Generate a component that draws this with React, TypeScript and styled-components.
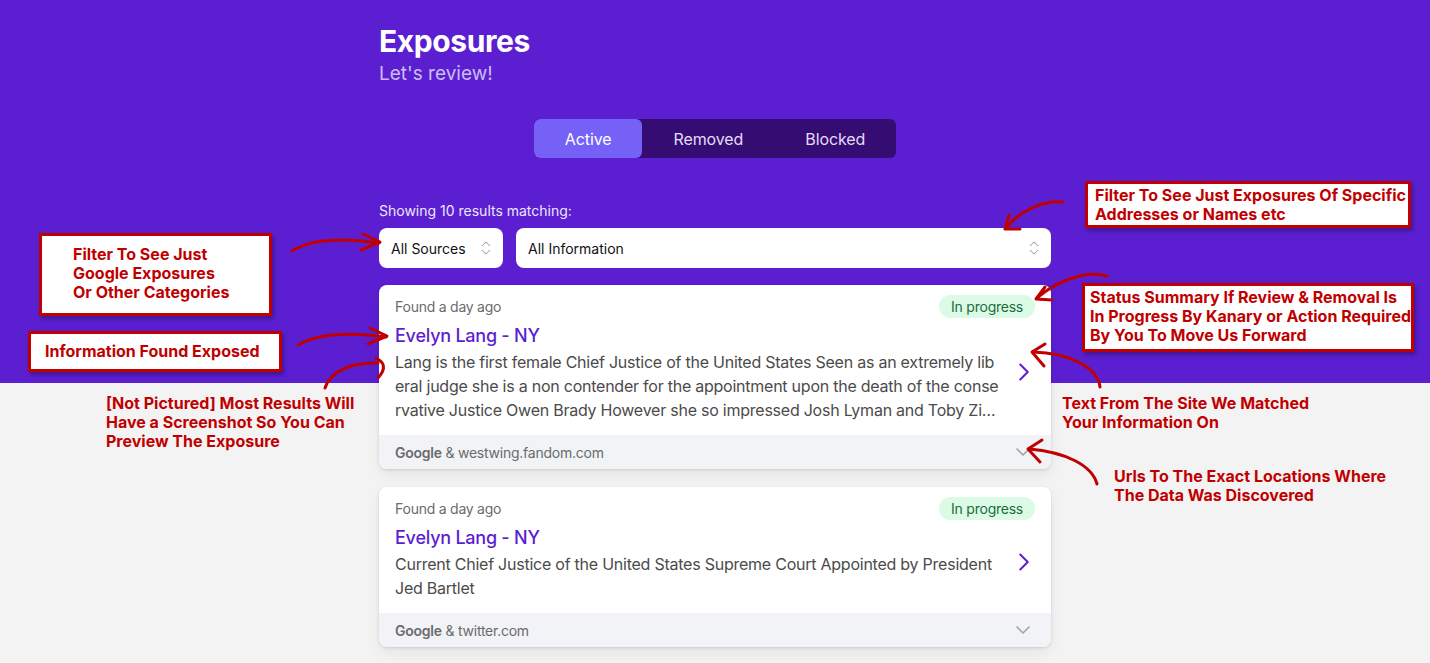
import styled, { createGlobalStyle } from "styled-components";
import { ChevronsUpDown, ChevronRight, ChevronDown } from "lucide-react";

const GlobalStyle = createGlobalStyle`
  html, body {
    margin: 0;
    padding: 0;
    background: #f3f3f3;
    font-family: Inter, "Noto Sans", "Liberation Sans", sans-serif;
  }
`;

const Page = styled.div`
  position: relative;
  height: 663px;
  overflow: hidden;
  background: linear-gradient(
    to bottom,
    #5b1fd1 0,
    #5b1fd1 383px,
    #f3f3f3 383px
  );
`;

const Column = styled.main`
  width: 672px;
  margin: 0 auto;
  padding-top: 23px;
  display: flex;
  flex-direction: column;
`;

const Title = styled.h1`
  margin: 0;
  font-size: 30px;
  line-height: 36px;
  font-weight: 700;
  color: #ffffff;
  letter-spacing: -0.4px;
`;

const Subtitle = styled.p`
  margin: 3px 0 0;
  font-size: 19px;
  line-height: 24px;
  color: #cbbdf7;
`;

const Tabs = styled.div`
  align-self: center;
  display: flex;
  margin-top: 33px;
  background: #350c72;
  border-radius: 6px;
  overflow: hidden;
`;

const Tab = styled.button<{ $active?: boolean }>`
  border: 0;
  height: 39px;
  padding: 0 31px;
  font-family: inherit;
  font-size: 16px;
  letter-spacing: -0.1px;
  border-radius: 6px;
  color: ${(p) => (p.$active ? "#ffffff" : "#e4dcfb")};
  background: ${(p) => (p.$active ? "#7561f6" : "transparent")};
`;

const Showing = styled.div`
  margin-top: 43px;
  font-size: 14px;
  line-height: 20px;
  color: #ece6ff;
`;

const Filters = styled.div`
  display: flex;
  gap: 13px;
  margin-top: 7px;
`;

const Select = styled.div<{ $grow?: boolean }>`
  display: flex;
  align-items: center;
  justify-content: space-between;
  height: 40px;
  box-sizing: border-box;
  padding: 0 8px 0 12px;
  border-radius: 8px;
  background: #ffffff;
  font-size: 14px;
  color: #111111;
  width: ${(p) => (p.$grow ? "auto" : "124px")};
  flex: ${(p) => (p.$grow ? "1" : "none")};

  svg {
    color: #a3a3a3;
  }
`;

const Results = styled.div`
  display: flex;
  flex-direction: column;
  gap: 18px;
  margin-top: 17px;
`;

const Card = styled.article`
  background: #ffffff;
  border-radius: 8px;
  overflow: hidden;
  letter-spacing: -0.24px;
  box-shadow: 0 1px 3px rgba(0, 0, 0, 0.12), 0 6px 14px rgba(0, 0, 0, 0.06);
`;

const CardBody = styled.div`
  padding: 10px 16px 13px;
`;

const CardTop = styled.div`
  display: flex;
  align-items: center;
  justify-content: space-between;
  height: 23px;
`;

const Found = styled.span`
  font-size: 14px;
  color: #6b6b6b;
`;

const Badge = styled.span`
  height: 23px;
  line-height: 23px;
  padding: 0 12px;
  border-radius: 12px;
  background: #dcfbe6;
  color: #1d6b3c;
  font-size: 14px;
`;

const CardMain = styled.div`
  display: flex;
  align-items: center;
  gap: 10px;
  margin-top: 4px;

  svg {
    flex: none;
    margin-right: -4px;
    color: #5b1fd1;
  }
`;

const CardText = styled.div`
  flex: 1;
  min-width: 0;
`;

const Name = styled.div`
  font-size: 18px;
  line-height: 28px;
  font-weight: 500;
  color: #5b1fd1;
`;

const Snippet = styled.p`
  margin: 0;
  font-size: 16px;
  line-height: 24px;
  color: #4b4b4b;
  word-break: break-all;
  display: -webkit-box;
  -webkit-line-clamp: 3;
  -webkit-box-orient: vertical;
  overflow: hidden;
`;

const CardFooter = styled.div`
  display: flex;
  align-items: center;
  justify-content: space-between;
  height: 34px;
  padding: 0 16px;
  background: #f1f3f7;
  font-size: 14px;
  color: #6b6b6b;

  b {
    font-weight: 600;
  }

  svg {
    color: #a0a0a0;
  }
`;

const Note = styled.div<{ $boxed?: boolean }>`
  position: absolute;
  box-sizing: border-box;
  font-size: 16px;
  line-height: 19px;
  font-weight: 700;
  color: #c00000;
  white-space: nowrap;
  ${(p) =>
    p.$boxed &&
    `
    background: #ffffff;
    border: 3px solid #c00000;
    box-shadow: 2px 3px 4px rgba(0, 0, 0, 0.3);
  `}
`;

const Arrows = styled.svg`
  position: absolute;
  left: 0;
  top: 0;
  pointer-events: none;

  path {
    fill: none;
    stroke: #c00000;
    stroke-width: 3;
    stroke-linecap: round;
    stroke-linejoin: round;
  }
`;

type Result = {
  name: string;
  text: string;
  site: string;
};

const results: Result[] = [
  {
    name: "Evelyn Lang - NY",
    text:
      "Lang is the first female Chief Justice of the United States Seen as an extremely liberal judge she is a non contender for the appointment upon the death of the conservative Justice Owen Brady However she so impressed Josh Lyman and Toby Ziegler that she was nominated",
    site: "westwing.fandom.com",
  },
  {
    name: "Evelyn Lang - NY",
    text:
      "Current Chief Justice of the United States Supreme Court Appointed by President Jed Bartlet",
    site: "twitter.com",
  },
];

const ResultCard = ({ name, text, site }: Result) => (
  <Card>
    <CardBody>
      <CardTop>
        <Found>Found a day ago</Found>
        <Badge>In progress</Badge>
      </CardTop>
      <CardMain>
        <CardText>
          <Name>{name}</Name>
          <Snippet>{text}</Snippet>
        </CardText>
        <ChevronRight size={30} strokeWidth={1.6} />
      </CardMain>
    </CardBody>
    <CardFooter>
      <span>
        <b>Google</b> &amp; {site}
      </span>
      <ChevronDown size={24} strokeWidth={1.5} />
    </CardFooter>
  </Card>
);

const App = () => {
  return (
    <Page>
      <GlobalStyle />
      <Column>
        <Title>Exposures</Title>
        <Subtitle>Let's review!</Subtitle>
        <Tabs>
          <Tab $active>Active</Tab>
          <Tab>Removed</Tab>
          <Tab>Blocked</Tab>
        </Tabs>
        <Showing>Showing 10 results matching:</Showing>
        <Filters>
          <Select>
            All Sources <ChevronsUpDown size={18} strokeWidth={1.4} />
          </Select>
          <Select $grow>
            All Information <ChevronsUpDown size={18} strokeWidth={1.4} />
          </Select>
        </Filters>
        <Results>
          {results.map((r, i) => (
            <ResultCard key={i} {...r} />
          ))}
        </Results>
      </Column>

      <Note $boxed style={{ left: 39, top: 233, width: 233, height: 83, padding: "9px 0 0 31px" }}>
        Filter To See Just
        <br />
        Google Exposures
        <br />
        Or Other Categories
      </Note>
      <Note $boxed style={{ left: 28, top: 331, width: 254, height: 41, padding: "8px 0 0 14px" }}>
        Information Found Exposed
      </Note>
      <Note $boxed style={{ left: 1085, top: 181, width: 326, height: 47, padding: "2px 0 0 7px" }}>
        Filter To See Just Exposures Of Specific
        <br />
        Addresses or Names etc
      </Note>
      <Note $boxed style={{ left: 1082, top: 283, width: 332, height: 69, padding: "2px 0 0 5px" }}>
        Status Summary If Review &amp; Removal Is
        <br />
        In Progress By Kanary or Action Required
        <br />
        By You To Move Us Forward
      </Note>
      <Note style={{ left: 106, top: 394 }}>
        [Not Pictured] Most Results Will
        <br />
        Have a Screenshot So You Can
        <br />
        Preview The Exposure
      </Note>
      <Note style={{ left: 1062, top: 394 }}>
        Text From The Site We Matched
        <br />
        Your Information On
      </Note>
      <Note style={{ left: 1114, top: 467 }}>
        Urls To The Exact Locations Where
        <br />
        The Data Was Discovered
      </Note>

      <Arrows width={1430} height={663} viewBox="0 0 1430 663">
        <path d="M292 251 C 312 238, 345 238, 379 243" />
        <path d="M363 234 L380 242 L361 250" />
        <path d="M298 345 C 318 333, 350 332, 386 337" />
        <path d="M370 328 L387 336 L368 344" />
        <path d="M325 388 C 330 372, 350 362, 378 363" />
        <path d="M376 358 C 384 362, 387 368, 378 378" />
        <path d="M1063 202 C 1045 200, 1020 210, 1006 228" />
        <path d="M1009 215 L1005 229 L1020 229" />
        <path d="M1107 276 C 1085 270, 1055 282, 1037 298" />
        <path d="M1045 287 L1036 299 L1052 300" />
        <path d="M1100 387 C 1098 368, 1070 353, 1033 352" />
        <path d="M1045 344 L1032 352 L1044 366" />
        <path d="M1097 484 C 1092 465, 1065 452, 1029 449" />
        <path d="M1042 440 L1028 449 L1040 462" />
      </Arrows>
    </Page>
  );
};

export default App;
